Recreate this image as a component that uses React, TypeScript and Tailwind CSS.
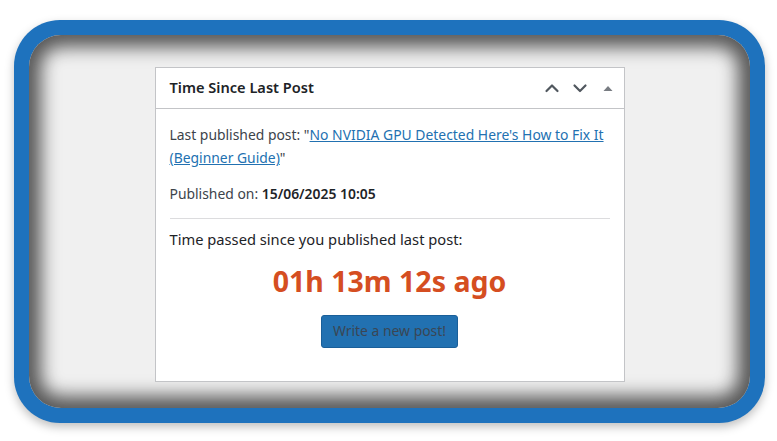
const font = { fontFamily: '"Noto Sans", "Open Sans", sans-serif' };

const ChevronUp = () => (
  <svg width="16" height="16" viewBox="0 0 16 16" fill="none" stroke="#50575e" strokeWidth="2.2" strokeLinecap="round" strokeLinejoin="round">
    <path d="M2.5 11 L8 5.5 L13.5 11" />
  </svg>
);

const ChevronDown = () => (
  <svg width="16" height="16" viewBox="0 0 16 16" fill="none" stroke="#50575e" strokeWidth="2.2" strokeLinecap="round" strokeLinejoin="round">
    <path d="M2.5 5.5 L8 11 L13.5 5.5" />
  </svg>
);

const Caret = () => (
  <svg width="12" height="12" viewBox="0 0 12 12">
    <path d="M1.5 9 L6 4 L10.5 9 Z" fill="#787c82" />
  </svg>
);

export default function App() {
  return (
    <div className="w-[777px] h-[441px] bg-white pt-5 pl-[14px]" style={font}>
      <div className="w-[751px] h-[403px] rounded-[46px] bg-[#1e72bd] p-[15px] shadow-[0_4px_10px_rgba(0,0,0,0.25)]">
        <div className="h-full rounded-[32px] bg-[#f0f0f0] shadow-[inset_0_0_18px_12px_#575757] flex justify-center pt-[32px]">
          <div className="w-[470px] h-[315px] bg-white border border-[#c3c4c7] flex flex-col">
            <div className="h-[41px] border-b border-[#c3c4c7] flex items-center pl-[14px] pr-[8px]">
              <h2 className="text-[14.6px] font-semibold text-[#1d2327] flex-1">Time Since Last Post</h2>
              <div className="flex items-center gap-[12px]">
                <ChevronUp />
                <ChevronDown />
                <span className="ml-[2px] mr-[2px]"><Caret /></span>
              </div>
            </div>
            <div className="px-[14px] pt-[14px] text-[13.9px] text-[#3c434a]">
              <p className="leading-[23px]">
                Last published post: "
                <a className="text-[#2271b1] underline">No NVIDIA GPU Detected Here's How to Fix It (Beginner Guide)</a>
                "
              </p>
              <p className="mt-[13px] leading-[23px]">
                Published on: <strong className="font-semibold text-[#1d2327]">15/06/2025 10:05</strong>
              </p>
              <div className="mt-[13px] border-t border-[#dcdcde]" />
              <p className="mt-[8px] text-[14.7px] leading-[24px] text-[#1d2327]">Time passed since you published last post:</p>
              <p className="mt-[12px] text-center text-[28.5px] font-bold leading-[36px] text-[#d54e21]">01h 13m 12s ago</p>
              <div className="mt-[16px] flex justify-center">
                <button className="h-[33px] px-[11px] rounded-[3px] bg-[#2271b1] border border-[#1a5f99] text-[13.9px] text-[#3a4654]">
                  Write a new post!
                </button>
              </div>
            </div>
          </div>
        </div>
      </div>
    </div>
  );
}
